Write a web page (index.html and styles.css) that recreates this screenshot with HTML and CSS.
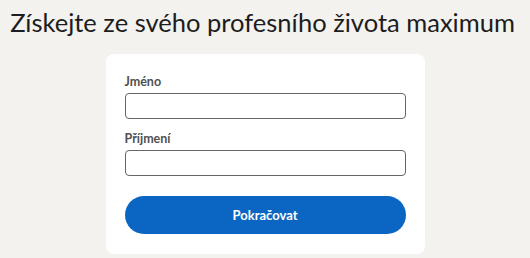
FILE: index.html
```html
<!DOCTYPE html>
<html lang="cs">
<head>
<meta charset="utf-8">
<title>Získejte ze svého profesního života maximum</title>
<link rel="stylesheet" href="styles.css">
</head>
<body>
<main class="page">
  <h1 class="title">Získejte ze svého profesního života maximum</h1>
  <form class="card">
    <label class="field">
      <span class="label">Jméno</span>
      <input class="input" type="text">
    </label>
    <label class="field">
      <span class="label">Příjmení</span>
      <input class="input" type="text">
    </label>
    <button class="btn" type="button">Pokračovat</button>
  </form>
</main>
</body>
</html>
```
FILE: styles.css
```css
html, body {
  margin: 0;
  padding: 0;
  background: #f3f2ef;
}
body {
  font-family: Lato, "Noto Sans", sans-serif;
  color: rgba(0, 0, 0, 0.9);
}
.page {
  display: flex;
  flex-direction: column;
  align-items: center;
  padding-top: 6px;
}
.title {
  margin: 0 0 0 -5px;
  font-size: 25.5px;
  line-height: 32px;
  font-weight: 400;
  color: #1d1d1d;
  white-space: nowrap;
}
.card {
  margin-top: 16px;
  width: 319px;
  box-sizing: border-box;
  background: #fff;
  border-radius: 8px;
  padding: 20px 19px 20px;
  display: flex;
  flex-direction: column;
}
.field {
  display: flex;
  flex-direction: column;
  margin-bottom: 12px;
}
.label {
  font-size: 12.5px;
  line-height: 16px;
  font-weight: 700;
  color: #505050;
  margin-bottom: 3px;
}
.input {
  height: 26px;
  box-sizing: border-box;
  border: 1px solid #666;
  border-radius: 4px;
  background: #fff;
  margin: 0;
  padding: 0 8px;
  font: inherit;
}
.btn {
  margin-top: 8px;
  height: 38px;
  border: 0;
  border-radius: 19px;
  background: #0a66c2;
  color: #fff;
  font-family: Lato, "Noto Sans", sans-serif;
  font-size: 13px;
  font-weight: 700;
  padding: 0;
}
```
